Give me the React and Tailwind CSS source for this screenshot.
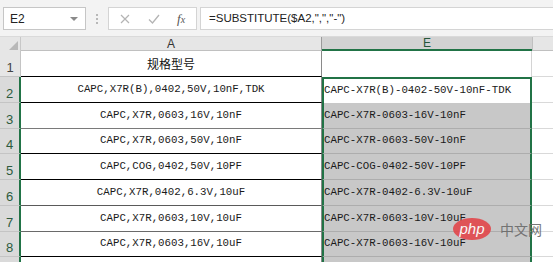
import React from 'react';

const rows = [
  { n: 2, a: 'CAPC,X7R(B),0402,50V,10nF,TDK', line: 'border-black' },
  { n: 3, a: 'CAPC,X7R,0603,16V,10nF', line: 'border-[#7a7a7a]' },
  { n: 4, a: 'CAPC,X7R,0603,50V,10nF', line: 'border-black' },
  { n: 5, a: 'CAPC,COG,0402,50V,10PF', line: 'border-black' },
  { n: 6, a: 'CAPC,X7R,0402,6.3V,10uF', line: 'border-[#5a5a5a]' },
  { n: 7, a: 'CAPC,X7R,0603,10V,10uF', line: 'border-[#6a6a6a]' },
  { n: 8, a: 'CAPC,X7R,0603,16V,10uF', line: 'border-black' },
];

const heights = ['h-[26px]', 'h-[26px]', 'h-[26px]', 'h-[25px]', 'h-[26px]', 'h-[26px]', 'h-[26px]', 'h-[25px]'];

const cellFont = "font-['Liberation_Mono','Noto_Sans_CJK_SC',monospace] text-[10.75px] text-[#1a1a1a]";

const Toolbar = () => (
  <div className="h-[37px] bg-[#f3f3f3] border-b border-[#dadada] flex items-start pt-[7px] pl-[3px]">
    <div className="w-[83px] h-[23px] bg-white border border-[#c6c6c6] flex items-center justify-between pl-[6px] pr-[7px]">
      <span className="font-['Liberation_Sans',sans-serif] text-[12px] text-[#222]">E2</span>
      <span className="w-0 h-0 border-l-[4px] border-r-[4px] border-t-[4px] border-l-transparent border-r-transparent border-t-[#8a8a8a]" />
    </div>
    <div className="w-[22px] h-[23px] flex flex-col items-center justify-center gap-[2px]">
      <span className="w-[2px] h-[2px] bg-[#b8b8b8]" />
      <span className="w-[2px] h-[2px] bg-[#b8b8b8]" />
      <span className="w-[2px] h-[2px] bg-[#b8b8b8]" />
    </div>
    <div className="w-[89px] h-[23px] bg-white border border-[#d4d4d4] flex items-center">
      <svg width="12" height="12" viewBox="0 0 12 12" className="ml-[10px]">
        <path d="M2 2 L10 10 M10 2 L2 10" stroke="#b4b4b4" strokeWidth="1.2" />
      </svg>
      <svg width="14" height="12" viewBox="0 0 14 12" className="ml-[16px]">
        <path d="M2 6.5 L5.5 10 L12 2" stroke="#b4b4b4" strokeWidth="1.3" fill="none" />
      </svg>
      <span className="ml-[16px] font-['Liberation_Serif',serif] italic text-[13px] text-[#555]">
        f<span className="text-[10px]">x</span>
      </span>
    </div>
    <div className="ml-[3px] flex-1 h-[23px] bg-white border border-[#d4d4d4] border-r-0 flex items-center pl-[8px]">
      <span className="font-['Liberation_Sans',sans-serif] text-[11.5px] text-[#222]">
        =SUBSTITUTE($A2,",","-")
      </span>
    </div>
  </div>
);

const HeaderRow = () => (
  <div className="flex h-[14px] font-['Liberation_Sans',sans-serif] text-[12px]">
    <div className="w-[21px] bg-[#e6e6e6] border-r border-[#c8c8c8] flex items-end justify-end pr-[2px] pb-[1px]">
      <svg width="9" height="9" viewBox="0 0 9 9">
        <path d="M9 0 L9 9 L0 9 Z" fill="#b8b8b8" />
      </svg>
    </div>
    <div className="w-[301px] bg-[#e6e6e6] border-b border-[#c0c0c0] border-r border-r-[#9a9a9a] flex items-center justify-center text-[#333] leading-none">
      A
    </div>
    <div className="w-[210px] bg-[#d2d2d2] border-b-2 border-[#217346] flex items-center justify-center text-[#26573a] leading-none">
      E
    </div>
    <div className="flex-1 bg-[#e6e6e6] border-l border-[#c0c0c0] border-b border-b-[#c0c0c0]" />
  </div>
);

const RowHead = ({ n, selected, h }) => (
  <div
    className={`w-[21px] ${h} border-b border-[#c4c4c4] flex items-end justify-center pb-[2px] font-['Liberation_Sans',sans-serif] text-[13px] leading-none ${
      selected ? 'bg-[#dadada] text-[#2d5a3d] border-r-2 border-r-[#217346]' : 'bg-[#e6e6e6] text-[#444] border-r border-r-[#c4c4c4]'
    }`}
  >
    {n}
  </div>
);

const Row1 = () => (
  <div className="flex">
    <RowHead n={1} h={heights[0]} />
    <div className={`w-[301px] ${heights[0]} border-b border-black border-r border-r-[#8a8a8a] flex items-center justify-center font-['Noto_Sans_CJK_SC',sans-serif] text-[12px] text-[#111]`}>
      规格型号
    </div>
    <div className={`w-[210px] ${heights[0]} bg-white border-r border-[#d4d4d4]`} />
    <div className={`flex-1 ${heights[0]} border-b border-[#d9d9d9]`} />
  </div>
);

const DataRow = ({ row, i }) => {
  const h = heights[i + 1];
  const active = i === 0;
  return (
    <div className="flex">
      <RowHead n={row.n} selected h={h} />
      <div className={`w-[301px] ${h} border-b ${row.line} border-r border-r-[#8a8a8a] flex items-end justify-center pb-[5px] ${cellFont}`}>
        {row.a}
      </div>
      <div
        className={`w-[210px] ${h} border-l-2 border-r-2 border-[#217346] flex items-end pb-[5px] ${cellFont} ${
          active ? 'bg-white border-t-2' : 'bg-[#c8c8c8] border-b border-b-[#adadad]'
        }`}
      >
        {row.a.split(',').join('-')}
      </div>
      <div className={`flex-1 ${h} border-b border-[#d9d9d9]`} />
    </div>
  );
};

export default function App() {
  return (
    <div className="w-[553px] h-[262px] overflow-hidden relative bg-white">
      <Toolbar />
      <HeaderRow />
      <Row1 />
      {rows.map((row, i) => (
        <DataRow key={row.n} row={row} i={i} />
      ))}
      <div className="flex">
        <div className="w-[21px] h-[10px] bg-[#dadada] border-r-2 border-[#217346]" />
        <div className="w-[301px] h-[10px] border-r border-[#8a8a8a]" />
        <div className="w-[210px] h-[10px] bg-[#c8c8c8] border-l-2 border-r-2 border-[#217346]" />
      </div>
      <div className="absolute left-[453px] top-[218px] flex items-center gap-[9px] opacity-90">
        <div className="w-[38px] h-[22px] rounded-[50%] bg-[#e2474b] flex items-center justify-center">
          <span className="font-['Liberation_Sans',sans-serif] italic text-[15px] text-white leading-none -mt-[2px]">php</span>
        </div>
        <span className="font-['Noto_Sans_CJK_SC',sans-serif] text-[14px] text-[#6a6a6a] leading-none">中文网</span>
      </div>
    </div>
  );
}
